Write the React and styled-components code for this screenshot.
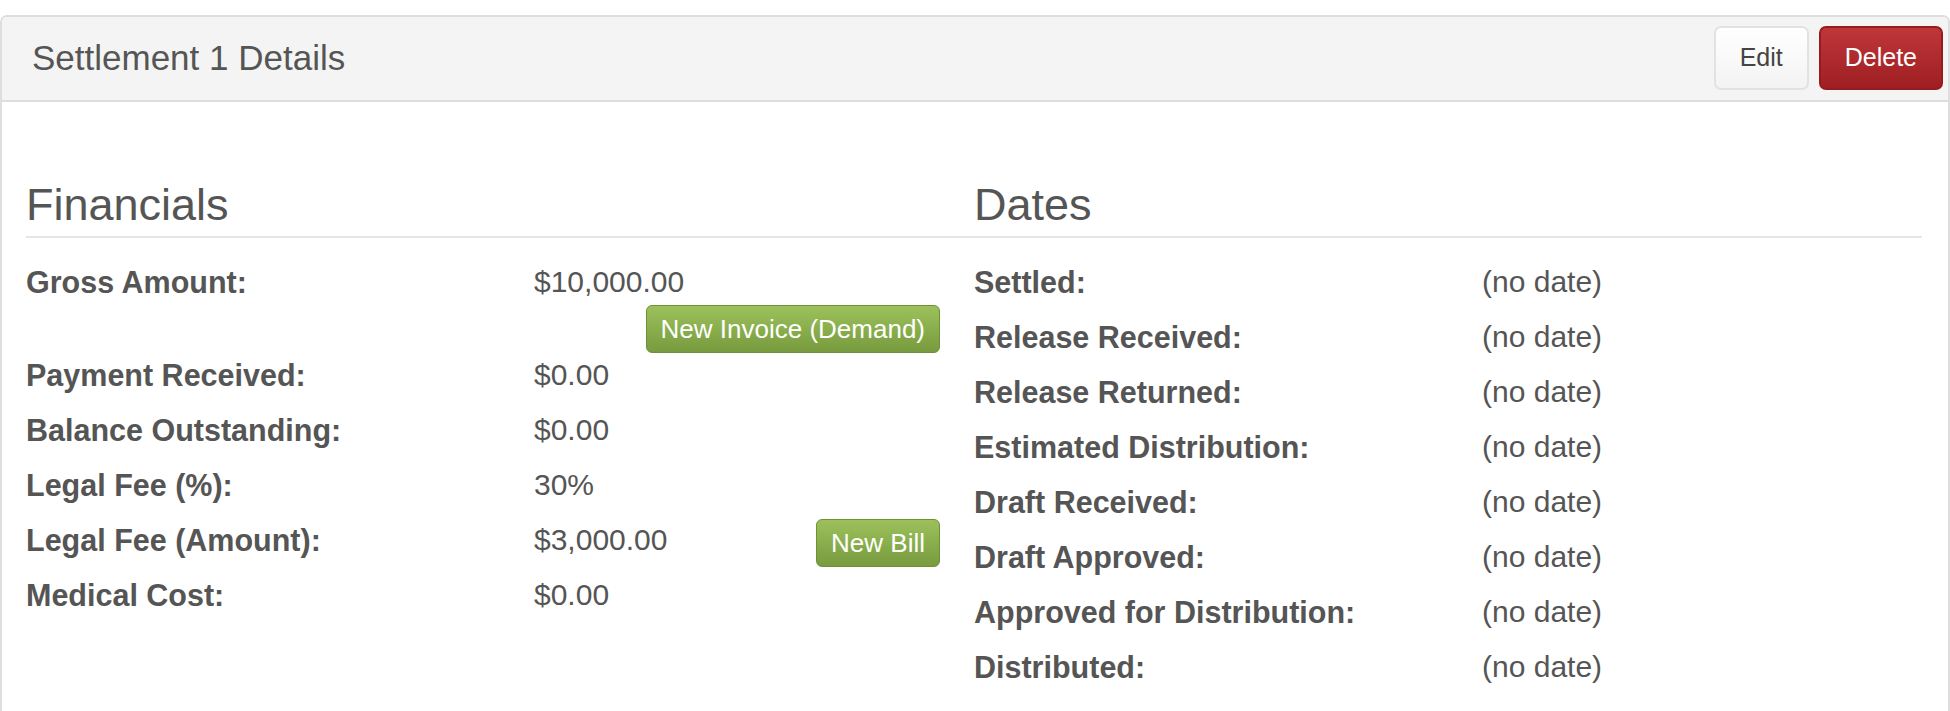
import styled, { createGlobalStyle } from "styled-components";

const GlobalStyle = createGlobalStyle`
  html, body {
    margin: 0;
    padding: 0;
    background: #ffffff;
  }
  body {
    font-family: "Liberation Sans", Arial, sans-serif;
    color: #555555;
  }
`;

const financials = [
  { label: "Gross Amount:", value: "$10,000.00", action: "New Invoice (Demand)", below: true },
  { label: "Payment Received:", value: "$0.00" },
  { label: "Balance Outstanding:", value: "$0.00" },
  { label: "Legal Fee (%):", value: "30%" },
  { label: "Legal Fee (Amount):", value: "$3,000.00", action: "New Bill" },
  { label: "Medical Cost:", value: "$0.00" },
];

const dates = [
  "Settled:",
  "Release Received:",
  "Release Returned:",
  "Estimated Distribution:",
  "Draft Received:",
  "Draft Approved:",
  "Approved for Distribution:",
  "Distributed:",
];

const App = () => {
  return (
    <Page>
      <GlobalStyle />
      <Panel>
        <PanelHeading>
          <PanelTitle>Settlement 1 Details</PanelTitle>
          <Actions>
            <Button>Edit</Button>
            <Button variant="danger">Delete</Button>
          </Actions>
        </PanelHeading>
        <PanelBody>
          <SectionHeads>
            <H3>Financials</H3>
            <H3>Dates</H3>
          </SectionHeads>
          <Columns>
            <Column>
              {financials.map((item) => (
                <Row key={item.label}>
                  <Label>{item.label}</Label>
                  <ValueCell stacked={item.below}>
                    <Value>{item.value}</Value>
                    {item.action && <SmallButton>{item.action}</SmallButton>}
                  </ValueCell>
                </Row>
              ))}
            </Column>
            <Column>
              {dates.map((label) => (
                <Row key={label}>
                  <Label>{label}</Label>
                  <ValueCell>
                    <Value>(no date)</Value>
                  </ValueCell>
                </Row>
              ))}
            </Column>
          </Columns>
        </PanelBody>
      </Panel>
    </Page>
  );
};

export default App;

const Page = styled.div`
  padding-top: 15px;
`;

const Panel = styled.div`
  border: 2px solid #dedede;
  border-radius: 7px;
  background: #ffffff;
  overflow: hidden;
`;

const PanelHeading = styled.div`
  display: flex;
  align-items: center;
  justify-content: space-between;
  height: 85px;
  padding: 0 5px 2px 30px;
  box-sizing: border-box;
  background: #f4f4f4;
  border-bottom: 2px solid #dedede;
`;

const PanelTitle = styled.h2`
  margin: 0;
  font-size: 35px;
  font-weight: normal;
  color: #555555;
`;

const Actions = styled.div`
  display: flex;
  gap: 10px;
`;

const Button = styled.button`
  height: 64px;
  padding: 0 24px;
  font-family: "Liberation Sans", Arial, sans-serif;
  font-size: 25px;
  border-radius: 7px;
  cursor: pointer;
  border: 2px solid ${(p) => (p.variant === "danger" ? "#971b1e" : "#e2e2e2")};
  color: ${(p) => (p.variant === "danger" ? "#ffffff" : "#444444")};
  background: ${(p) =>
    p.variant === "danger"
      ? "linear-gradient(to bottom, #bf363a 0%, #9e1f22 100%)"
      : "linear-gradient(to bottom, #ffffff 0%, #f3f3f3 100%)"};
`;

const PanelBody = styled.div`
  padding: 78px 26px 60px 24px;
`;

const SectionHeads = styled.div`
  display: grid;
  grid-template-columns: 1fr 1fr;
  padding-bottom: 6px;
  border-bottom: 2px solid #e6e6e6;
`;

const H3 = styled.h3`
  margin: 0;
  font-size: 45px;
  line-height: 50px;
  font-weight: normal;
  color: #555555;
`;

const Columns = styled.div`
  display: grid;
  grid-template-columns: 1fr 1fr;
  padding-top: 22px;
`;

const Column = styled.div`
  padding-right: 34px;
`;

const Row = styled.div`
  display: grid;
  grid-template-columns: 508px 1fr;
  align-items: start;
  min-height: 55px;
`;

const Label = styled.div`
  font-size: 30.5px;
  font-weight: bold;
  line-height: 44px;
  color: #555555;
`;

const ValueCell = styled.div`
  display: flex;
  flex-direction: ${(p) => (p.stacked ? "column" : "row")};
  justify-content: space-between;
  align-items: ${(p) => (p.stacked ? "stretch" : "flex-start")};
`;

const Value = styled.div`
  font-size: 30px;
  line-height: 44px;
  color: #555555;
`;

const SmallButton = styled.button`
  align-self: flex-end;
  height: 48px;
  margin-top: 1px;
  padding: 0 14px;
  font-family: "Liberation Sans", Arial, sans-serif;
  font-size: 26px;
  color: #ffffff;
  border: 1px solid #6f8f38;
  border-radius: 6px;
  background: linear-gradient(to bottom, #9cc15b 0%, #779b3e 100%);
  cursor: pointer;
`;
